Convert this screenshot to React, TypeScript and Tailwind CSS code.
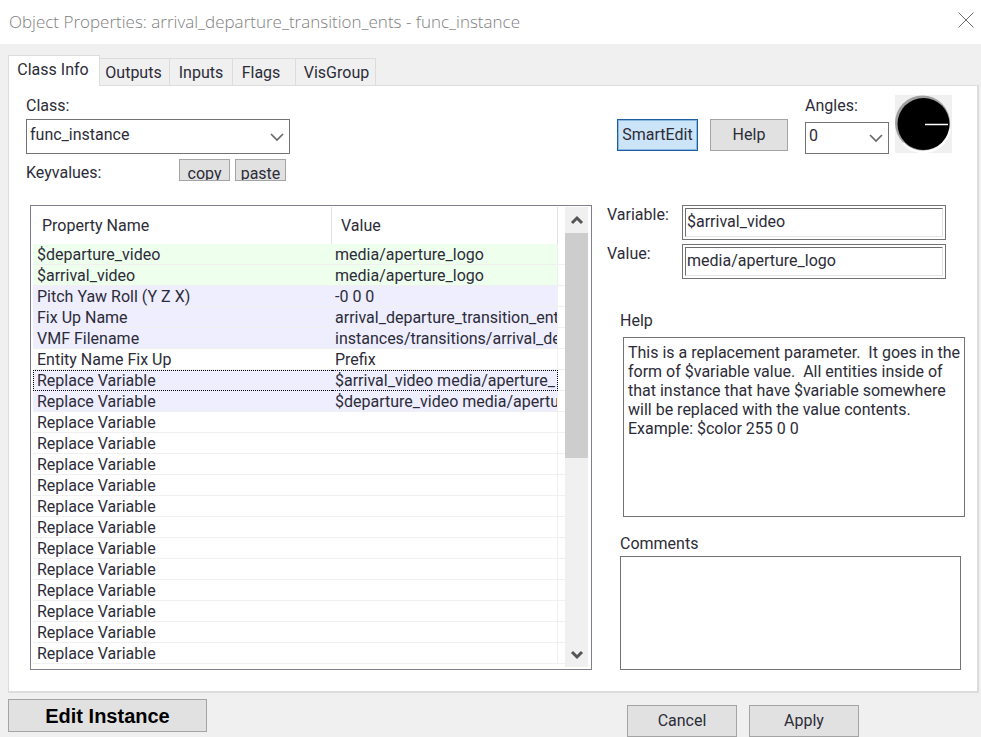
import React, { useState } from 'react';

type RowTint = 'added' | 'set' | 'plain';

interface KeyValueRow {
  name: string;
  value: string;
  tint: RowTint;
}

const ROW_TINT: Record<RowTint, string> = {
  added: 'bg-[#eeffee]',
  set: 'bg-[#eeeeff]',
  plain: 'bg-white',
};

const TABS = [
  { label: 'Outputs', width: 'w-[70px] pr-0.5' },
  { label: 'Inputs', width: 'w-[63px]' },
  { label: 'Flags', width: 'w-[63px] pr-1.5' },
  { label: 'VisGroup', width: 'w-[80px] pl-0.5' },
];

const ROWS: KeyValueRow[] = [
  { name: '$departure_video', value: 'media/aperture_logo', tint: 'added' },
  { name: '$arrival_video', value: 'media/aperture_logo', tint: 'added' },
  { name: 'Pitch Yaw Roll (Y Z X)', value: '-0 0 0', tint: 'set' },
  { name: 'Fix Up Name', value: 'arrival_departure_transition_ent', tint: 'set' },
  { name: 'VMF Filename', value: 'instances/transitions/arrival_de', tint: 'set' },
  { name: 'Entity Name Fix Up', value: 'Prefix', tint: 'plain' },
  { name: 'Replace Variable', value: '$arrival_video media/aperture_', tint: 'set' },
  { name: 'Replace Variable', value: '$departure_video media/apertu', tint: 'set' },
  ...Array.from({ length: 12 }, (): KeyValueRow => ({ name: 'Replace Variable', value: '', tint: 'plain' })),
];

const HELP_TEXT =
  'This is a replacement parameter.  It goes in the form of $variable value.  All entities inside of that instance that have $variable somewhere will be replaced with the value contents.\nExample: $color 255 0 0';

const BUTTON = 'border border-[#a4a4a4] bg-[#e1e1e1] text-center';
const FIELD = 'border border-[#737373] bg-white';

function Chevron({ up = false, bold = false }: { up?: boolean; bold?: boolean }) {
  return (
    <svg width="14" height="10" viewBox="0 0 14 10" className="block" aria-hidden="true">
      <path
        d={up ? 'M2 8 L7 3 L12 8' : bold ? 'M2 2 L7 7 L12 2' : 'M1 2 L7 8 L13 2'}
        fill="none"
        stroke={bold ? '#555555' : '#6a6a6a'}
        strokeWidth={bold ? 3 : 1.7}
      />
    </svg>
  );
}

interface DropDownProps {
  id: string;
  options: string[];
  className: string;
}

function DropDown({ id, options, className }: DropDownProps) {
  return (
    <div className={`relative ${className}`}>
      <select id={id} className={`h-full w-full appearance-none pb-1 pl-[3px] pr-6 outline-none ${FIELD}`}>
        {options.map((o) => (
          <option key={o}>{o}</option>
        ))}
      </select>
      <span className="pointer-events-none absolute top-1/2 right-1.5 -translate-y-1/2">
        <Chevron />
      </span>
    </div>
  );
}

function AngleDial() {
  return (
    <svg width="57" height="58" viewBox="0 0 57 58" role="img" aria-label="Angle">
      <rect width="57" height="58" fill="#f0f0f0" />
      <circle cx="27.5" cy="28" r="27.5" fill="#a0a0a0" />
      <path d="M8 48 A27 27 0 0 0 55 34" fill="none" stroke="#ffffff" strokeWidth="2" />
      <circle cx="28.5" cy="29" r="26" fill="#000000" />
      <path d="M30 29.5 H53" stroke="#ffffff" strokeWidth="1.5" />
    </svg>
  );
}

interface FieldProps {
  id: string;
  label: string;
  value: string;
  onChange: (value: string) => void;
}

function LabelledInput({ id, label, value, onChange }: FieldProps) {
  return (
    <div className="flex h-[35px] pr-[19px]">
      <label htmlFor={id} className="w-[75px] shrink-0 leading-5">{label}</label>
      <div className={`min-w-0 flex-1 p-0.5 ${FIELD}`}>
        <input
          id={id}
          value={value}
          onChange={(e) => onChange(e.target.value)}
          className="block h-full w-full border border-[#6e6e6e] border-r-[#e3e3e3] border-b-[#e3e3e3] pb-0.5 pl-px outline-none"
        />
      </div>
    </div>
  );
}

function KeyValueList() {
  const [selected, setSelected] = useState(6);

  return (
    <div className="flex min-w-0 flex-1 overflow-hidden border border-[#80808c] bg-white pt-px">
      <div className="min-w-0 flex-1 overflow-hidden pl-0.5">
        <table className="w-full table-fixed border-separate border-spacing-0">
          <colgroup>
            <col />
            <col className="w-[226px]" />
            <col className="w-[7px]" />
          </colgroup>
          <thead>
            <tr className="h-[37px] text-left">
              <th className="border-r border-[#e2e2e2] pl-[9px] font-normal">Property Name</th>
              <th className="border-r border-[#e2e2e2] pl-[9px] font-normal">Value</th>
              <th />
            </tr>
          </thead>
          <tbody>
            {ROWS.map((row, i) => {
              const edge = i === selected
                ? 'border-y border-dotted border-y-black'
                : 'border-b border-b-[#f0f0f0]';
              const left = i === selected ? 'border-l border-l-black pl-[3px]' : 'pl-1';
              const right = i === selected ? 'border-r border-r-black' : 'border-r border-r-[#f0f0f0]';
              return (
                <tr key={i} onClick={() => setSelected(i)} className="h-[21px] leading-[17px]">
                  <td className={`overflow-hidden whitespace-nowrap ${ROW_TINT[row.tint]} ${edge} ${left}`}>
                    {row.name}
                  </td>
                  <td className={`overflow-hidden pl-[3px] whitespace-nowrap ${ROW_TINT[row.tint]} ${edge} ${right}`}>
                    {row.value}
                  </td>
                  <td className="border-b border-[#f0f0f0]" />
                </tr>
              );
            })}
          </tbody>
        </table>
      </div>

      {/* scroll bar */}
      <div className="mb-0.5 mr-[3px] flex w-[23px] flex-col items-stretch bg-[#f0f0f0]">
        <button type="button" aria-label="Scroll up" className="flex h-[26px] items-center justify-center">
          <Chevron up bold />
        </button>
        <div className="flex-1">
          <div className="h-[55%] bg-[#cdcdcd]" />
        </div>
        <button type="button" aria-label="Scroll down" className="flex h-[25px] items-center justify-center">
          <Chevron bold />
        </button>
      </div>
    </div>
  );
}

export default function App() {
  const [variable, setVariable] = useState('$arrival_video');
  const [value, setValue] = useState('media/aperture_logo');

  return (
    <div className="flex h-screen min-h-[600px] flex-col bg-[#f0f0f0] font-[Roboto,'Liberation_Sans',sans-serif] text-[16px] leading-5 text-[#2c2c38]">
      <header className="flex h-11 shrink-0 items-center justify-between bg-white pr-[7px] pl-[9px]">
        <h1 className="font-['Open_Sans',sans-serif] text-[17px] font-[350] text-[#808080]">
          Object Properties: arrival_departure_transition_ents - func_instance
        </h1>
        <button type="button" aria-label="Close" className="pb-1">
          <svg width="16" height="16" viewBox="0 0 16 16" aria-hidden="true">
            <path d="M0.5 0.5 L15.5 15.5 M15.5 0.5 L0.5 15.5" stroke="#6b6b6b" strokeWidth="1" />
          </svg>
        </button>
      </header>

      <div role="tablist" className="z-10 -mb-px flex h-[42px] shrink-0 items-end pl-2">
        <button
          type="button"
          role="tab"
          aria-selected="true"
          className="h-[31px] w-[92px] border border-b-0 border-[#dcdcdc] bg-white pr-0.5 pb-0.5"
        >
          Class Info
        </button>
        {TABS.map((tab) => (
          <button
            key={tab.label}
            type="button"
            role="tab"
            aria-selected="false"
            className={`h-[28px] border border-l-0 border-[#dcdcdc] pt-px ${tab.width}`}
          >
            {tab.label}
          </button>
        ))}
      </div>

      <main className="mr-0.5 ml-2 flex min-h-0 flex-1 flex-col border border-r-2 border-b-2 border-[#dcdcdc] bg-white pb-[21px]">
        <section className="flex shrink-0 items-start pr-[25px] pl-[17px]">
          <div className="w-[264px] pt-2.5">
            <label htmlFor="class">Class:</label>
            <DropDown id="class" options={['func_instance']} className="mt-[3px] h-[35px]" />
            <div className="mt-[5px] flex h-6 items-start gap-[5px]">
              <span className="mr-auto pt-1">Keyvalues:</span>
              <button type="button" className={`h-[22px] w-[51px] overflow-hidden pt-1 ${BUTTON}`}>
                copy
              </button>
              <button type="button" className={`mr-1 h-[22px] w-[51px] overflow-hidden pt-1 ${BUTTON}`}>
                paste
              </button>
            </div>
          </div>

          <div className="ml-auto flex gap-3 pt-[33px]">
            <button type="button" className="h-8 w-[81px] border border-[#1f5f9f] bg-[#cce4f7] shadow-[inset_0_0_0_1px_#8bb8e0]">SmartEdit</button>
            <button type="button" className={`h-8 w-[78px] ${BUTTON}`}>Help</button>
          </div>
          <div className="ml-[17px] w-[84px] pt-2.5">
            <label htmlFor="angles">Angles:</label>
            <DropDown id="angles" options={['0', '90', '180', '270', 'Up', 'Down']} className="mt-1.5 h-8" />
          </div>
          <div className="ml-1.5 pt-[9px]">
            <AngleDial />
          </div>
        </section>

        <section className="mt-[22px] flex min-h-0 flex-1 gap-[15px] pr-3 pl-[21px]">
          <KeyValueList />

          <div className="flex w-[358px] shrink-0 flex-col">
            <div className="flex flex-col gap-1">
              <LabelledInput id="variable" label="Variable:" value={variable} onChange={setVariable} />
              <LabelledInput id="value" label="Value:" value={value} onChange={setValue} />
            </div>

            <label htmlFor="help" className="mt-8 pl-[13px]">Help</label>
            <textarea
              id="help"
              readOnly
              value={HELP_TEXT}
              className={`mt-1.5 ml-4 min-h-0 flex-1 resize-none overflow-hidden px-1 pt-[5px] leading-[19px] outline-none ${FIELD}`}
            />

            <label htmlFor="comments" className="mt-[17px] pl-[13px]">Comments</label>
            <textarea
              id="comments"
              className={`mt-0.5 mr-1 ml-[13px] h-[114px] resize-none p-1 outline-none ${FIELD}`}
            />
          </div>
        </section>
      </main>

      <footer className="flex h-11 shrink-0 items-start pt-1.5 pl-2">
        <button type="button" className={`h-[33px] w-[199px] font-['Liberation_Sans',sans-serif] text-[20px] font-bold text-black ${BUTTON}`}>
          Edit Instance
        </button>
        <div className="mt-1.5 mr-[122px] ml-auto flex gap-3">
          <button type="button" className={`h-8 w-[110px] ${BUTTON}`}>Cancel</button>
          <button type="button" className={`h-8 w-[110px] ${BUTTON}`}>Apply</button>
        </div>
      </footer>
    </div>
  );
}
